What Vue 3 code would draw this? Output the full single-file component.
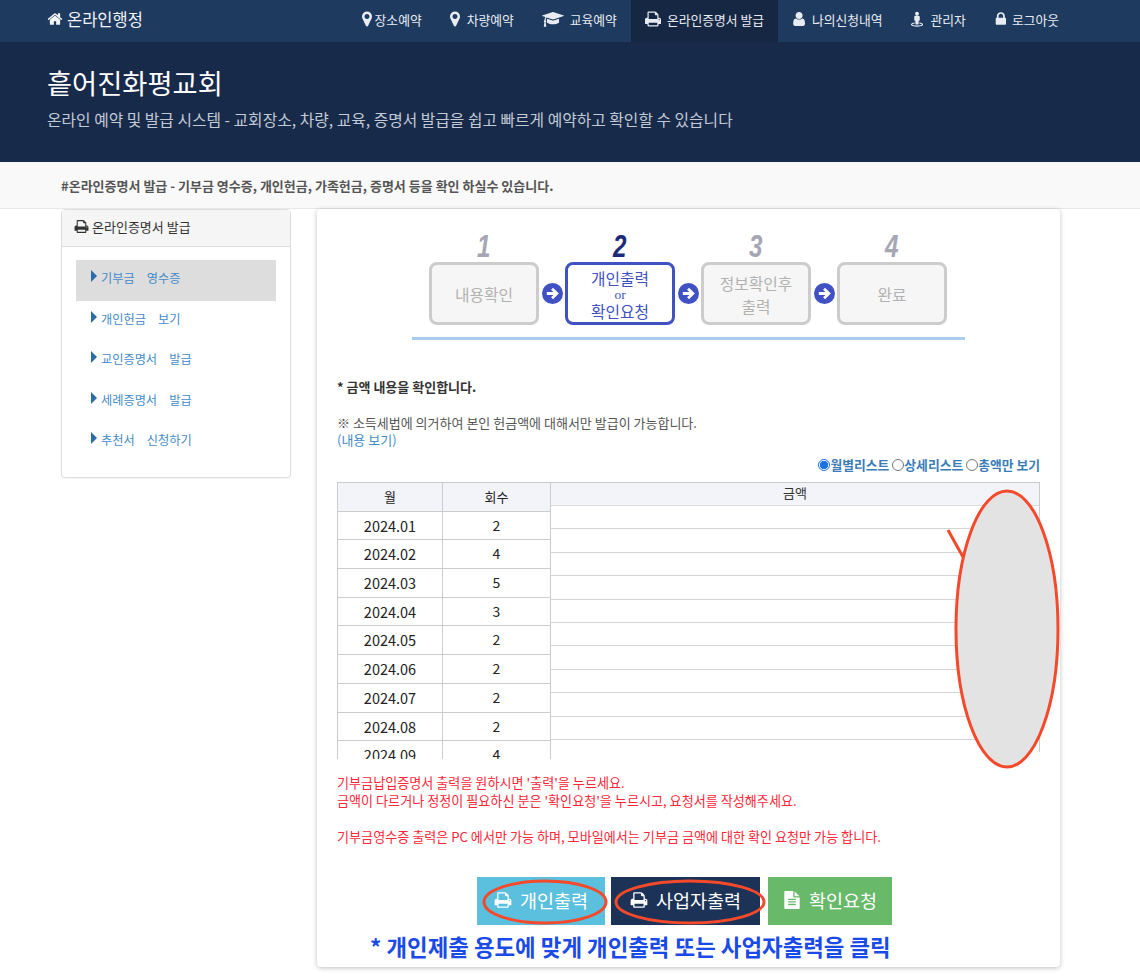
<template>
  <div class="page">
    <header class="topbar">
      <a class="brand"><svg class="ico" viewBox="0 0 1792 1792"><path :d="icons.home" /></svg>온라인행정</a>
      <nav class="menu">
        <a v-for="item in menu" :key="item.label" class="menu-item" :class="{ active: item.active }" :style="{ gap: item.gap + 'px' }">
          <svg class="ico" :style="{ width: item.w + 'px' }" :viewBox="item.box"><path :d="icons[item.icon]" /></svg>
          {{ item.label }}
        </a>
      </nav>
    </header>

    <section class="hero">
      <h1>흩어진화평교회</h1>
      <p>온라인 예약 및 발급 시스템 - 교회장소, 차량, 교육, 증명서 발급을 쉽고 빠르게 예약하고 확인할 수 있습니다</p>
    </section>

    <div class="subbar">#온라인증명서 발급 - 기부금 영수증, 개인헌금, 가족헌금, 증명서 등을 확인 하실수 있습니다.</div>

    <div class="content">
      <aside class="side">
        <div class="side-head"><svg class="ico" viewBox="0 0 1792 1792"><path :d="icons.print" /></svg>온라인증명서 발급</div>
        <ul class="side-list">
          <li v-for="(s, i) in sideItems" :key="s" :class="{ on: i === 0 }"><i class="tri"></i>{{ s }}</li>
        </ul>
      </aside>

      <main class="card">
        <div class="steps">
          <template v-for="(st, i) in steps" :key="st.num">
            <div class="step" :class="{ current: st.current }">
              <span class="step-num">{{ st.num }}</span>
              <div class="step-box">
                <template v-for="(line, j) in st.lines" :key="j">
                  <span :class="{ or: line === 'or' }">{{ line }}</span>
                </template>
              </div>
            </div>
            <svg v-if="i < 3" class="step-arrow" viewBox="0 0 24 24">
              <circle cx="12" cy="12" r="12" fill="#3f51c3" />
              <path d="M5.5 12h11M11.5 6.500L17 12l-5.500 5.500" fill="none" stroke="#fff" stroke-width="3.200" />
            </svg>
          </template>
        </div>
        <div class="steps-line"></div>

        <p class="lead">* 금액 내용을 확인합니다.</p>
        <p class="note">※ 소득세법에 의거하여 본인 헌금액에 대해서만 발급이 가능합니다.</p>
        <a class="more">(내용 보기)</a>

        <div class="radios">
          <label v-for="(r, i) in radios" :key="r"><i class="radio" :class="{ on: i === 0 }"></i>{{ r }}</label>
        </div>

        <div class="tables">
          <div class="t-left">
            <div class="t-row t-head"><div>월</div><div>회수</div></div>
            <div v-for="r in rows" :key="r.month" class="t-row"><div>{{ r.month }}</div><div>{{ r.count }}</div></div>
          </div>
          <div class="t-right">
            <div class="r-head">금액</div>
            <div v-for="n in 10" :key="n" class="r-row"></div>
          </div>
        </div>

        <div class="warn">
          <p>기부금납입증명서 출력을 원하시면 '출력'을 누르세요.</p>
          <p>금액이 다르거나 정정이 필요하신 분은 '확인요청'을 누르시고, 요청서를 작성해주세요.</p>
          <p class="warn-gap">기부금영수증 출력은 PC 에서만 가능 하며, 모바일에서는 기부금 금액에 대한 확인 요청만 가능 합니다.</p>
        </div>

        <div class="btns">
          <button class="btn b-info"><svg class="ico" viewBox="0 0 1792 1792"><path :d="icons.print" /></svg>개인출력</button>
          <button class="btn b-navy"><svg class="ico" viewBox="0 0 1792 1792"><path :d="icons.print" /></svg>사업자출력</button>
          <button class="btn b-green"><svg class="ico" viewBox="0 0 1792 1792"><path :d="icons.file" /></svg>확인요청</button>
        </div>
        <p class="hint">* 개인제출 용도에 맞게 개인출력 또는 사업자출력을 클릭</p>

        <!-- hand drawn marks on top of the screenshot -->
        <svg class="marks" width="743" height="758" viewBox="0 0 743 758">
          <ellipse cx="690" cy="420" rx="51" ry="138" fill="#e3e3e3" stroke="#f4492a" stroke-width="3" />
          <path d="M631 321L646 348" stroke="#f4492a" stroke-width="3" fill="none" />
          <ellipse cx="228" cy="693" rx="61" ry="21" fill="none" stroke="#f4492a" stroke-width="3" />
          <ellipse cx="373" cy="693" rx="74" ry="21" fill="none" stroke="#f4492a" stroke-width="3" />
        </svg>
      </main>
    </div>
  </div>
</template>

<script setup>
const icons = {
  home: 'M1472 992v480q0 26-19 45t-45 19h-384v-384h-256v384h-384q-26 0-45-19t-19-45v-480q0-1 .5-3t.5-3l575-474 575 474q1 2 1 6zm223-69l-62 74q-8 9-21 11h-3q-13 0-21-7l-692-577-692 577q-12 8-24 7-13-2-21-11l-62-74q-8-10-7-23.5t11-21.5l719-599q32-26 76-26t76 26l244 204v-195q0-14 9-23t23-9h192q14 0 23 9t9 23v408l219 182q10 8 11 21.5t-7 23.5z',
  marker: 'M1152 640q0-106-75-181t-181-75-181 75-75 181 75 181 181 75 181-75 75-181zm256 0q0 109-33 179l-364 774q-16 33-47.5 52t-67.5 19-67.5-19-46.5-52l-365-774q-33-70-33-179 0-212 150-362t362-150 362 150 150 362z',
  cap: 'M1774 836l18 316q4 69-82 128t-235 93.5-323 34.5-323-34.5-235-93.5-82-128l18-316 574 181q22 7 48 7t48-7zm530-324q0 23-22 31l-1120 352q-4 1-10 1t-10-1l-652-206q-43 34-71 111.5t-34 178.5q63 36 63 109 0 69-58 107l58 433q2 14-8 25-9 11-24 11h-192q-15 0-24-11-10-11-8-25l58-433q-58-38-58-107 0-73 65-111 11-207 98-330l-333-104q-22-8-22-31t22-31l1120-352q4-1 10-1t10 1l1120 352q22 8 22 31z',
  print: 'M448 1536h896v-256h-896v256zm0-640h896v-384h-160q-40 0-68-28t-28-68v-160h-640v640zm1152 64q0-26-19-45t-45-19-45 19-19 45 19 45 45 19 45-19 19-45zm128 0v416q0 13-9.500 22.500t-22.500 9.500h-224v160q0 40-28 68t-68 28h-960q-40 0-68-28t-28-68v-160h-224q-13 0-22.500-9.500t-9.500-22.500v-416q0-79 56.500-135.500t135.500-56.500h64v-544q0-40 28-68t68-28h672q40 0 88 20t76 48l152 152q28 28 48 76t20 88v256h64q79 0 135.500 56.500t56.500 135.500z',
  user: 'M1536 1399q0 109-62.500 187t-150.500 78h-854q-88 0-150.500-78t-62.500-187q0-85 8.500-160.500t31.500-152 58.500-131 94-89 134.500-34.500q131 128 313 128t313-128q76 0 134.500 34.500t94 89 58.500 131 31.500 152 8.500 160.500zm-256-887q0 159-112.500 271.500t-271.500 112.500-271.500-112.500-112.500-271.500 112.500-271.500 271.500-112.500 271.500 112.500 112.500 271.500z',
  street: 'M1408 1536q0 63-61.500 113.500t-164 81-225 46-253.500 15.500-253.500-15.500-225-46-164-81-61.500-113.500q0-49 33-88.500t91-66.500 118-44.500 131-29.500q26-5 48 10.500t26 41.500q5 26-10.500 48t-41.500 26q-58 10-106 23.500t-76.500 25.500-48.500 23.500-27.500 19.500-8.500 12q3 11 27 26.500t73 33 114 32.500 160.500 25 201.500 10 201.500-10 160.500-25 114-33 73-33.500 27-27.500q-1-4-8.500-11t-27.500-19-48.500-23.500-76.500-25-106-23.500q-26-4-41.500-26t-10.500-48q4-26 26-41.500t48-10.500q71 10 131 29.500t118 44.500 91 66.500 33 88.500zm-384-896v384q0 26-19 45t-45 19h-64v384q0 26-19 45t-45 19h-256q-26 0-45-19t-19-45v-384h-64q-26 0-45-19t-19-45v-384q0-53 37.500-90.500t90.500-37.500h384q53 0 90.500 37.500t37.500 90.500zm-96-384q0 93-65.500 158.500t-158.500 65.500-158.500-65.500-65.500-158.500 65.500-158.500 158.500-65.500 158.500 65.500 65.500 158.500z',
  lock: 'M640 768h512v-192q0-106-75-181t-181-75-181 75-75 181v192zm832 96v576q0 40-28 68t-68 28h-960q-40 0-68-28t-28-68v-576q0-40 28-68t68-28h32v-192q0-184 132-316t316-132 316 132 132 316v192h32q40 0 68 28t28 68z',
  file: 'M1596 476q14 14 28 36h-472v-472q22 14 36 28zm-476 164h544v1056q0 40-28 68t-68 28h-1344q-40 0-68-28t-28-68v-1600q0-40 28-68t68-28h800v544q0 40 28 68t68 28zm160 736v-64q0-14-9-23t-23-9h-704q-14 0-23 9t-9 23v64q0 14 9 23t23 9h704q14 0 23-9t9-23zm0-256v-64q0-14-9-23t-23-9h-704q-14 0-23 9t-9 23v64q0 14 9 23t23 9h704q14 0 23-9t9-23zm0-256v-64q0-14-9-23t-23-9h-704q-14 0-23 9t-9 23v64q0 14 9 23t23 9h704q14 0 23-9t9-23z',
}

const menu = [
  { label: '장소예약', icon: 'marker', w: 10, gap: 3, box: '384 128 1024 1536' },
  { label: '차량예약', icon: 'marker', w: 10, gap: 7, box: '384 128 1024 1536' },
  { label: '교육예약', icon: 'cap', w: 22, gap: 6, box: '0 100 2304 1500' },
  { label: '온라인증명서 발급', icon: 'print', w: 16, gap: 6, box: '64 128 1664 1536', active: true },
  { label: '나의신청내역', icon: 'user', w: 13, gap: 7, box: '128 128 1408 1536' },
  { label: '관리자', icon: 'street', w: 12, gap: 8, box: '0 0 1408 1792' },
  { label: '로그아웃', icon: 'lock', w: 12, gap: 6, box: '128 128 1344 1536' },
]

const sideItems = ['기부금　영수증', '개인헌금　보기', '교인증명서　발급', '세례증명서　발급', '추천서　신청하기']

const steps = [
  { num: 1, lines: ['내용확인'] },
  { num: 2, lines: ['개인출력', 'or', '확인요청'], current: true },
  { num: 3, lines: ['정보확인후', '출력'] },
  { num: 4, lines: ['완료'] },
]

const radios = ['월별리스트', '상세리스트', '총액만 보기']

const rows = [
  { month: '2024.01', count: 2 },
  { month: '2024.02', count: 4 },
  { month: '2024.03', count: 5 },
  { month: '2024.04', count: 3 },
  { month: '2024.05', count: 2 },
  { month: '2024.06', count: 2 },
  { month: '2024.07', count: 2 },
  { month: '2024.08', count: 2 },
  { month: '2024.09', count: 4 },
]
</script>

<style>
html, body {
  margin: 0;
  background: #fff;
}
</style>

<style scoped>
.page {
  font-family: "Noto Sans CJK KR", "Noto Sans", sans-serif;
  color: #333;
  font-size: 13px;
  height: 977px;
  overflow: hidden;
}

p {
  margin: 0;
}

.ico {
  width: 1em;
  height: 1em;
  fill: currentColor;
  flex: none;
}

.topbar {
  height: 42px;
  padding: 0 67px 0 47px;
  background: #1e3a5f;
  display: flex;
  align-items: stretch;
  justify-content: space-between;
  color: #e8ecf2;
}

.brand {
  display: flex;
  align-items: center;
  gap: 4px;
  padding-bottom: 4px;
  font-size: 16.500px;
  color: #f2f4f7;
}

.brand .ico {
  width: 16px;
  height: 16px;
}

.menu {
  display: flex;
}

.menu-item {
  display: flex;
  align-items: center;
  padding: 0 14px 4px;
  font-size: 12.800px;
  white-space: nowrap;
}

.menu-item .ico {
  height: 16px;
}

.menu-item.active {
  background: #162744;
}

.hero {
  height: 120px;
  box-sizing: border-box;
  padding: 20px 47px 0;
  background: #182a4a;
  color: #fff;
}

.hero h1 {
  margin: 0;
  font-size: 27.300px;
  font-weight: 400;
  line-height: 40px;
}

.hero p {
  margin-top: 7px;
  font-size: 15.800px;
  line-height: 22px;
  color: #c2cad6;
}

.subbar {
  height: 47px;
  box-sizing: border-box;
  padding-left: 61px;
  line-height: 47px;
  background: #f9f9f9;
  border-bottom: 1px solid #e8e8e8;
  font-weight: 700;
  font-size: 13px;
  color: #555;
}

.content {
  display: flex;
  align-items: flex-start;
  gap: 26px;
  padding: 0 80px 0 61px;
}

.side {
  width: 230px;
  height: 269px;
  box-sizing: border-box;
  border: 1px solid #ddd;
  border-radius: 4px;
  box-shadow: 0 1px 1px rgba(0, 0, 0, 0.05);
}

.side-head {
  height: 37px;
  box-sizing: border-box;
  display: flex;
  align-items: center;
  gap: 3px;
  padding: 0 0 3px 12px;
  background: #f5f5f5;
  border-bottom: 1px solid #ddd;
  font-size: 13px;
}

.side-head .ico {
  width: 15px;
  height: 15px;
}

.side-list {
  list-style: none;
  margin: 0;
  padding: 13px 14px 0;
}

.side-list li {
  height: 40.500px;
  line-height: 37px;
  padding-left: 15px;
  color: #428bca;
  font-size: 12.200px;
  white-space: nowrap;
}

.side-list li.on {
  background: #ddd;
}

.tri {
  display: inline-block;
  border-left: 6px solid #2c6ca8;
  border-top: 6px solid transparent;
  border-bottom: 6px solid transparent;
  margin-right: 4px;
  vertical-align: 1px;
}

.card {
  position: relative;
  width: 743px;
  height: 758px;
  box-sizing: border-box;
  padding: 27px 20px 0;
  border-radius: 4px;
  box-shadow: 0 1px 5px rgba(0, 0, 0, 0.25);
}

.steps {
  display: flex;
  justify-content: flex-start;
  align-items: flex-end;
  gap: 2.500px;
  margin-left: 92px;
}

.step {
  width: 110px;
  flex: none;
  display: flex;
  flex-direction: column;
  align-items: center;
}

.step-num {
  display: inline-block;
  font-family: "Liberation Sans", sans-serif;
  font-weight: 700;
  font-style: italic;
  font-size: 31px;
  line-height: 22px;
  padding-bottom: 4px;
  color: #a5a5b3;
  transform: scaleX(0.78);
}

.step-box {
  width: 110px;
  height: 63px;
  box-sizing: border-box;
  border: 3px solid #ccc;
  border-radius: 8px;
  padding-top: 2px;
  background: #f6f6f6;
  color: #b2b2b2;
  font-size: 15.800px;
  line-height: 23px;
  display: flex;
  flex-direction: column;
  align-items: center;
  justify-content: center;
}

.step.current .step-num {
  color: #1c2b78;
}

.step.current .step-box {
  border-color: #3f51c3;
  background: #fff;
  color: #3f51c3;
  line-height: 19px;
}

.step .or {
  font-family: "Liberation Serif", serif;
  font-size: 13.500px;
  line-height: 14px;
}

.step-arrow {
  width: 21px;
  height: 23px;
  flex: none;
  margin-bottom: 20px;
}

.steps-line {
  height: 3px;
  width: 553px;
  margin: 12px 0 0 75px;
  background: #a9cdee;
}

.lead {
  margin-top: 38px;
  font-weight: 700;
  line-height: 18px;
  color: #333;
}

.note {
  margin-top: 18px;
  line-height: 18px;
  color: #555;
}

.more {
  display: block;
  line-height: 16px;
  color: #428bca;
}

.radios {
  margin-top: 8px;
  display: flex;
  justify-content: flex-end;
  gap: 3px;
  line-height: 18px;
  font-size: 12.800px;
  font-weight: 700;
  color: #3a7cb8;
}

.radios label {
  display: flex;
  align-items: center;
}

.radio {
  display: inline-block;
  width: 12px;
  height: 12px;
  box-sizing: border-box;
  border: 1px solid #767676;
  border-radius: 50%;
}

.radio.on {
  border-color: #1a73e8;
  background: radial-gradient(circle, #1a73e8 58%, #fff 62%);
}

.tables {
  margin-top: 8px;
  height: 277px;
  overflow: hidden;
  display: flex;
  align-items: flex-start;
}

.t-left {
  width: 214px;
  flex: none;
  border-left: 1px solid #ccc;
  border-top: 1px solid #ccc;
  box-sizing: border-box;
  font-size: 14px;
  color: #222;
}

.t-row {
  display: grid;
  grid-template-columns: 105px 108px;
  height: 28.700px;
  box-sizing: border-box;
  border-bottom: 1px solid #ccc;
}

.t-row > div {
  text-align: center;
  line-height: 27px;
  border-right: 1px solid #ccc;
}

.t-row > div:first-child {
  font-size: 14.500px;
}

.t-head {
  background: #f3f3fa;
  font-size: 13px;
}

.t-head > div:first-child {
  font-size: 13px;
}

.t-right {
  flex: 1;
  height: 270px;
  box-sizing: border-box;
  border-right: 1px solid #ccc;
  border-top: 1px solid #ccc;
}

.r-head {
  height: 23px;
  box-sizing: border-box;
  text-align: center;
  line-height: 19px;
  font-size: 13px;
  background: #f3f3fa;
  border-bottom: 1px solid #ddd;
}

.r-row {
  height: 23.400px;
  box-sizing: border-box;
  border-bottom: 1px solid #d5d5d5;
}

.warn {
  margin-top: 15px;
  color: #ff2638;
  font-size: 13.100px;
  line-height: 18px;
}

.warn-gap {
  margin-top: 18px;
}

.btns {
  margin-top: 31px;
  display: flex;
  gap: 6px;
  padding-left: 140px;
}

.btn {
  height: 48px;
  padding: 0 0 3px;
  border: 0;
  display: flex;
  align-items: center;
  justify-content: center;
  gap: 8px;
  color: #fff;
  font-family: inherit;
  font-size: 18.500px;
}

.btn .ico {
  width: 18px;
  height: 18px;
}

.b-info {
  width: 128px;
  background: #5bc0de;
}

.b-navy {
  width: 149px;
  background: #1c3357;
}

.b-green {
  width: 124px;
  margin-left: 2px;
  background: #68b96a;
}

.hint {
  margin: 5px 0 0 33px;
  font-size: 22.400px;
  font-weight: 700;
  line-height: 32px;
  color: #1a4be8;
  white-space: nowrap;
}

.marks {
  position: absolute;
  left: 0;
  top: 0;
  pointer-events: none;
}
</style>
